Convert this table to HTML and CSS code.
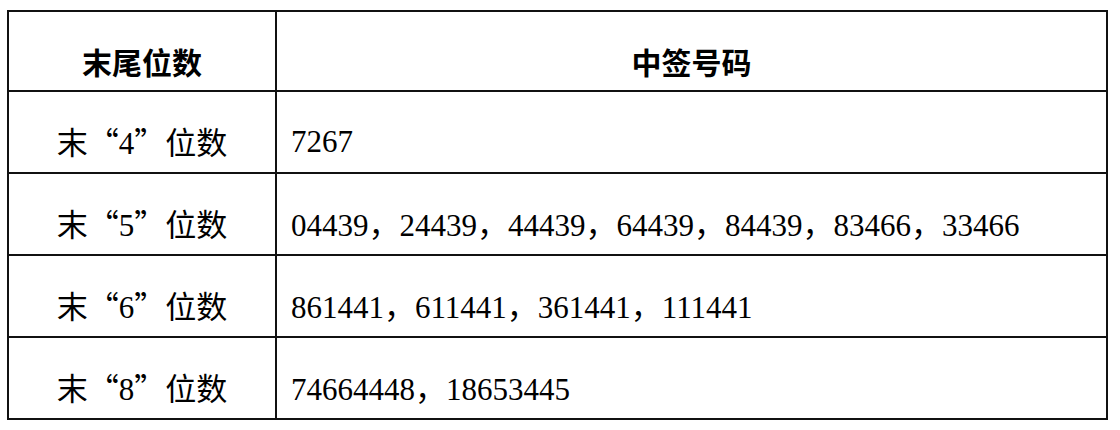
FILE: index.html
```html
<!DOCTYPE html>
<html lang="zh-CN">
<head>
<meta charset="utf-8">
<link rel="stylesheet" href="styles.css">
</head>
<body>
<table class="lottery">
  <tr class="head">
    <th class="col-a">末尾位数</th>
    <th class="col-b">中签号码</th>
  </tr>
  <tr>
    <td class="col-a"><span class="cjk">末“</span>4<span class="cjk">”位数</span></td>
    <td class="col-b">7267</td>
  </tr>
  <tr>
    <td class="col-a"><span class="cjk">末“</span>5<span class="cjk">”位数</span></td>
    <td class="col-b">04439<span class="cjk">，</span>24439<span class="cjk">，</span>44439<span class="cjk">，</span>64439<span class="cjk">，</span>84439<span class="cjk">，</span>83466<span class="cjk">，</span>33466</td>
  </tr>
  <tr>
    <td class="col-a"><span class="cjk">末“</span>6<span class="cjk">”位数</span></td>
    <td class="col-b">861441<span class="cjk">，</span>611441<span class="cjk">，</span>361441<span class="cjk">，</span>111441</td>
  </tr>
  <tr>
    <td class="col-a"><span class="cjk">末“</span>8<span class="cjk">”位数</span></td>
    <td class="col-b">74664448<span class="cjk">，</span>18653445</td>
  </tr>
</table>
</body>
</html>
```

FILE: styles.css
```css
html, body {
  margin: 0;
  padding: 0;
  background: #fff;
}

body {
  padding: 10px 0 0 7px;
  font-family: "Liberation Serif", "Noto Sans CJK SC", serif;
  color: #000;
}

.lottery {
  border-collapse: separate;
  border-spacing: 0;
  border-top: 2px solid #111;
  border-left: 2px solid #111;
  width: 1101px;
  table-layout: fixed;
}

.lottery th,
.lottery td {
  border-right: 2px solid #111;
  border-bottom: 2px solid #111;
  height: 80px;
  box-sizing: border-box;
  padding: 20px 0 0 0;
  vertical-align: middle;
  font-size: 31px;
  line-height: 36px;
}

.lottery tr.head th {
  height: 80px;
}

.lottery tr td {
  height: 82px;
}

.col-a {
  width: 268px;
  text-align: center;
}

.lottery td.col-b {
  text-align: left;
  padding-left: 14px;
}

.lottery th {
  font-family: "Noto Sans CJK SC", sans-serif;
  font-weight: 700;
  font-size: 30px;
  text-align: center;
}

.cjk {
  font-family: "Noto Sans CJK SC", sans-serif;
  font-weight: 400;
}
```
